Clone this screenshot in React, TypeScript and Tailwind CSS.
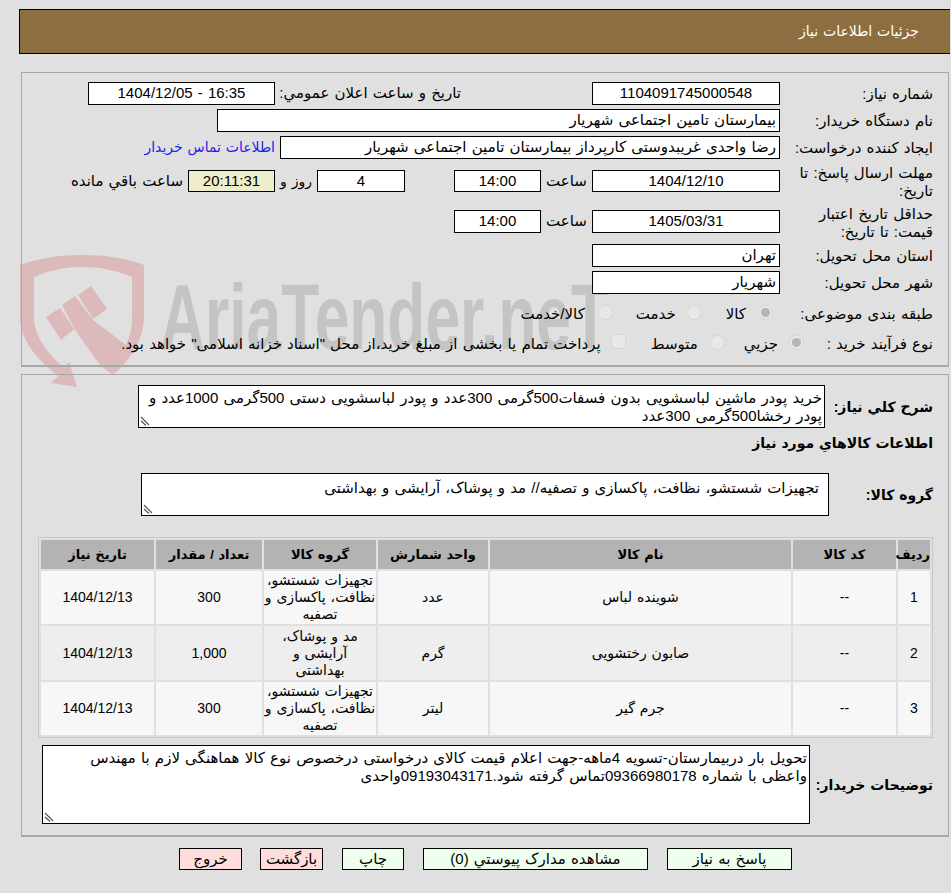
const font = { fontFamily: '"Liberation Sans", "DejaVu Sans", sans-serif' };

const Box = ({ w, children, center = true, bg = "bg-white", h = "h-[23px]" }: any) => (
  <div
    className={`${w} ${bg} ${h} border border-black px-[3px] text-[15px] leading-[20px] whitespace-nowrap overflow-hidden ${center ? "text-center" : "text-right"}`}
  >
    {children}
  </div>
);

const Label = ({ children, className = "w-[153px]" }: any) => (
  <div className={`${className} shrink-0 text-[15px] leading-[18px]`}>{children}</div>
);

const Radio = ({ checked = false }: any) => (
  <span className="-mt-[4px] inline-flex h-[15px] w-[15px] shrink-0 items-center justify-center rounded-full border border-[#d4d4d4] bg-[#e8e8e8]">
    {checked && <span className="h-[9px] w-[9px] rounded-full bg-[#b5b5b5]" />}
  </span>
);

const Grip = () => (
  <svg className="absolute bottom-[1px] left-[1px] h-[10px] w-[10px]" viewBox="0 0 10 10">
    <path d="M1 1L9 9M1 5L6 9.5" stroke="#555" strokeWidth="1.2" fill="none" />
  </svg>
);

const Th = ({ children }: any) => (
  <th className="bg-[#b3b3b3] text-[13px] font-bold text-center align-middle p-0 whitespace-nowrap">{children}</th>
);

const Td = ({ children, odd }: any) => (
  <td className={`${odd ? "bg-[#f7f7f7]" : "bg-[#eeeeee]"} text-[14px] text-center align-middle p-0 leading-[17px] whitespace-nowrap`}>
    {children}
  </td>
);

const group1 = (
  <>
    تجهیزات شستشو،
    <br />
    نظافت، پاکسازی و
    <br />
    تصفیه
  </>
);
const group2 = (
  <>
    مد و پوشاک،
    <br />
    آرایشی و
    <br />
    بهداشتی
  </>
);

const rows = [
  { id: "1", name: "شوینده لباس", unit: "عدد", group: group1, qty: "300", date: "1404/12/13", h: "h-[53px]" },
  { id: "2", name: "صابون رختشویی", unit: "گرم", group: group2, qty: "1,000", date: "1404/12/13", h: "h-[54px]" },
  { id: "3", name: "جرم گیر", unit: "لیتر", group: group1, qty: "300", date: "1404/12/13", h: "h-[53px]" },
];

const Btn = ({ w, red, children }: any) => (
  <div className={`${w} ${red ? "bg-[#ffdddd]" : "bg-[#eeffee]"} h-[22px] border border-black text-center text-[15px] leading-[20px]`}>
    {children}
  </div>
);

const Watermark = () => (
  <div dir="ltr" className="pointer-events-none absolute left-[20px] top-[250px] flex items-start">
    <svg width="130" height="140" viewBox="20 250 130 140" className="shrink-0">
      <path
        d="M20 265C40 258 60 255 82 255C105 255 125 258 144 265V317C144 340 130 360 113 375L126 345C130 336 132 328 132 317V277C115 270 100 267 82 267C65 267 50 270 34 277V317C34 335 46 352 64 368L69 362L77 387L51 383L58 376C36 358 20 340 20 317Z"
        fill="#dcb9bb"
      />
      <path
        d="M46 317L60 308L74 329L61 340ZM78 295L91 286L107 309L93 319ZM62 305L75 296L93 320L126 345L113 375L100 365L75 330Z"
        fill="#dcb9bb"
      />
    </svg>
    <span
      className="ml-[10px] mt-[17px] origin-left scale-x-[0.67] text-[93px] leading-[100px] font-bold text-[#c4c4c4] whitespace-nowrap"
      style={{ fontFamily: '"Liberation Sans", sans-serif' }}
    >
      AriaTender.neT
    </span>
  </div>
);

export default function App() {
  return (
    <div dir="rtl" style={font} className="relative h-[893px] w-[951px] overflow-hidden bg-[#e0e0e0] text-black [word-spacing:1px]">
      <Watermark />
      <div className="relative">
        <div className="mr-[1px] ml-[19px] mt-[9px] flex h-[45px] items-center border border-black border-r-0 bg-[#8d6e41] pr-[31px] text-[14px] text-white">
          جزئیات اطلاعات نیاز
        </div>

        <div className="mr-[2px] ml-[21px] mt-[18px] h-[295px] border border-[#a8a8a8] border-b-2 pr-[15px]">
          <div className="flex h-[23px] mt-[9px] items-center">
            <Label>شماره نیاز:</Label>
            <Box w="w-[188px]">1104091745000548</Box>
            <div className="w-[181px] mr-[131px] text-[15px] whitespace-nowrap">تاریخ و ساعت اعلان عمومي:</div>
            <div className="mr-[5px]"><Box w="w-[187px]"><span dir="ltr">1404/12/05 - 16:35</span></Box></div>
          </div>
          <div className="flex h-[23px] mt-[4px] items-center">
            <Label>نام دستگاه خریدار:</Label>
            <Box w="w-[563px]" center={false}>بیمارستان تامین اجتماعی شهریار</Box>
          </div>
          <div className="flex h-[23px] mt-[4px] items-center">
            <Label>ایجاد کننده درخواست:</Label>
            <Box w="w-[500px]" center={false}>رضا واحدی غریبدوستی کارپرداز بیمارستان تامین اجتماعی شهریار</Box>
            <div className="mr-[5px] text-[14px] text-[#2222ee] whitespace-nowrap">اطلاعات تماس خریدار</div>
          </div>
          <div className="flex h-[36px] mt-[5px] items-start">
            <Label>
              مهلت ارسال پاسخ: تا
              <br />
              تاریخ:
            </Label>
            <div className="mt-[6px] flex items-center">
              <Box w="w-[188px]" h="h-[22px]">1404/12/10</Box>
              <div className="w-[51px] text-center text-[15px]">ساعت</div>
              <Box w="w-[87px]" h="h-[22px]">14:00</Box>
              <div className="mr-[49px]"><Box w="w-[88px]" h="h-[22px]">4</Box></div>
              <div className="mr-[5px] w-[28px] text-[14px] whitespace-nowrap">روز و</div>
              <div className="mr-[9px]"><Box w="w-[87px]" h="h-[22px]" bg="bg-[#eeeecc]">20:11:31</Box></div>
              <div className="mr-[5px] text-[15px] whitespace-nowrap">ساعت باقي مانده</div>
            </div>
          </div>
          <div className="flex h-[36px] mt-[5px] items-start">
            <Label>
              حداقل تاریخ اعتبار
              <br />
              قیمت: تا تاریخ:
            </Label>
            <div className="mt-[5px] flex items-center">
              <Box w="w-[188px]">1405/03/31</Box>
              <div className="w-[51px] text-center text-[15px]">ساعت</div>
              <Box w="w-[87px]">14:00</Box>
            </div>
          </div>
          <div className="flex h-[23px] mt-[3px] items-center">
            <Label>استان محل تحویل:</Label>
            <Box w="w-[188px]" center={false}>تهران</Box>
          </div>
          <div className="flex h-[23px] mt-[4px] items-center">
            <Label>شهر محل تحویل:</Label>
            <Box w="w-[188px]" center={false}>شهریار</Box>
          </div>
          <div className="flex h-[20px] mt-[10px] items-center text-[15px]">
            <Label>طبقه بندی موضوعی:</Label>
            <div className="mr-[7px] flex"><Radio checked /></div>
            <span className="mr-[12px]">کالا</span>
            <div className="mr-[24px] flex"><Radio /></div>
            <span className="mr-[11px]">خدمت</span>
            <div className="mr-[23px] flex"><Radio /></div>
            <span className="mr-[13px]">کالا/خدمت</span>
          </div>
          <div className="flex h-[20px] mt-[10px] items-center text-[15px]">
            <Label className="w-[129px]">نوع فرآیند خرید :</Label>
            <div className="flex"><Radio checked /></div>
            <span className="mr-[11px]">جزیي</span>
            <div className="mr-[19px] flex"><Radio /></div>
            <span className="mr-[12px]">متوسط</span>
            <div className="mr-[25px] -mt-[6px] h-[15px] w-[15px] shrink-0 rounded-[3px] border border-[#d4d4d4] bg-[#e8e8e8]" />
            <span className="mr-[10px] whitespace-nowrap">پرداخت تمام یا بخشی از مبلغ خرید،از محل "اسناد خزانه اسلامی" خواهد بود.</span>
          </div>
        </div>

        <div className="mr-[2px] ml-[21px] mt-[7px] h-[463px] border border-[#a8a8a8] border-b-2 pr-[15px] pl-[16px]">
          <div className="flex mt-[10px] h-[43px]">
            <div className="w-[108px] shrink-0 pt-[13px] text-[14px] leading-[18px] font-bold">شرح کلي نیاز:</div>
            <div className="relative h-[43px] w-[687px] border border-black bg-white px-[2px] pt-[3px] text-[15px] leading-[18px]">
              خرید پودر ماشین لباسشویی بدون فسفات500گرمی 300عدد و پودر لباسشویی دستی 500گرمی 1000عدد و پودر رخشا500گرمی 300عدد
              <Grip />
            </div>
          </div>
          <div className="mt-[5px] h-[20px] text-[14px] leading-[20px] font-bold">اطلاعات کالاهاي مورد نیاز</div>
          <div className="flex mt-[20px] h-[43px]">
            <div className="w-[104px] shrink-0 pt-[13px] text-[14px] leading-[18px] font-bold whitespace-nowrap">گروه کالا:</div>
            <div className="relative h-[43px] w-[688px] border border-black bg-white pr-[9px] pt-[5px] text-[15px] leading-[18px]">
              تجهیزات شستشو، نظافت، پاکسازی و تصفیه// مد و پوشاک، آرایشی و بهداشتی
              <Grip />
            </div>
          </div>
          <div className="mt-[21px] border border-[#c8c8c8]">
            <table className="w-full table-fixed border-separate border-spacing-[2px]">
              <colgroup>
                <col className="w-[32px]" />
                <col className="w-[103px]" />
                <col className="w-[301px]" />
                <col className="w-[110px]" />
                <col className="w-[112px]" />
                <col className="w-[106px]" />
                <col />
              </colgroup>
              <thead>
                <tr className="h-[29px]">
                  <Th>ردیف</Th>
                  <Th>کد کالا</Th>
                  <Th>نام کالا</Th>
                  <Th>واحد شمارش</Th>
                  <Th>گروه کالا</Th>
                  <Th>تعداد / مقدار</Th>
                  <Th>تاریخ نیاز</Th>
                </tr>
              </thead>
              <tbody>
                {rows.map((r, i) => (
                  <tr key={r.id} className={r.h}>
                    <Td odd={i % 2 === 0}>{r.id}</Td>
                    <Td odd={i % 2 === 0}>--</Td>
                    <Td odd={i % 2 === 0}>{r.name}</Td>
                    <Td odd={i % 2 === 0}>{r.unit}</Td>
                    <Td odd={i % 2 === 0}>{r.group}</Td>
                    <Td odd={i % 2 === 0}>{r.qty}</Td>
                    <Td odd={i % 2 === 0}>{r.date}</Td>
                  </tr>
                ))}
              </tbody>
            </table>
          </div>
          <div className="flex mt-[7px] h-[79px]">
            <div className="w-[123px] shrink-0 pt-[31px] text-[14px] leading-[18px] font-bold whitespace-nowrap">توضیحات خریدار:</div>
            <div className="relative h-[79px] w-[768px] border border-black bg-white px-[2px] pt-[3px] text-[15px] leading-[18px]">
              تحویل بار دربیمارستان-تسویه 4ماهه-جهت اعلام قیمت کالای درخواستی درخصوص نوع کالا هماهنگی لازم با مهندس
              <br />
              واعظی با شماره 09366980178تماس گرفته شود.09193043171واحدی
              <Grip />
            </div>
          </div>
        </div>

        <div className="mt-[11px] flex pr-[159px]">
          <Btn w="w-[125px]">پاسخ به نیاز</Btn>
          <div className="mr-[19px]"><Btn w="w-[225px]">مشاهده مدارک پیوستي (0)</Btn></div>
          <div className="mr-[19px]"><Btn w="w-[62px]">چاپ</Btn></div>
          <div className="mr-[19px]"><Btn w="w-[63px]" red>بازگشت</Btn></div>
          <div className="mr-[18px]"><Btn w="w-[63px]" red>خروج</Btn></div>
        </div>
      </div>
    </div>
  );
}
